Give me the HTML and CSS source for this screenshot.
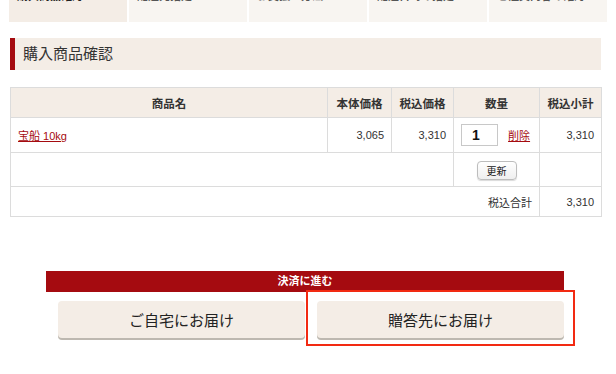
FILE: index.html
```html
<!DOCTYPE html>
<html lang="ja">
<head>
  <meta charset="UTF-8">
  <meta name="viewport" content="width=device-width, initial-scale=1.0">
  <title>購入商品確認</title>
  <link rel="stylesheet" href="styles.css">
</head>
<body>
  <div id="page">
    <ul id="steps">
      <li class="step active"><span>購入商品確認</span><span class="arrow">&#x25BC;</span></li>
      <li class="step"><span>配送先指定</span><span class="arrow">&#x25BC;</span></li>
      <li class="step"><span>お支払い方法</span><span class="arrow">&#x25BC;</span></li>
      <li class="step"><span>配送日時の指定</span><span class="arrow">&#x25BC;</span></li>
      <li class="step"><span>ご注文内容の確認</span></li>
    </ul>

    <div id="content">
      <h2 class="heading">購入商品確認</h2>

      <table id="cart">
        <thead>
          <tr>
            <th class="col-name">商品名</th>
            <th class="col-price">本体価格</th>
            <th class="col-tax">税込価格</th>
            <th class="col-qty">数量</th>
            <th class="col-sub">税込小計</th>
          </tr>
        </thead>
        <tbody>
          <tr class="item-row">
            <td><a href="#">宝船 10kg</a></td>
            <td class="num">3,065</td>
            <td class="num">3,310</td>
            <td class="qty">
              <input class="qty-input" type="text" value="1">
              <a href="#" class="remove">削除</a>
            </td>
            <td class="num">3,310</td>
          </tr>
          <tr class="update-row">
            <td colspan="3"></td>
            <td class="center"><button class="update" type="button">更新</button></td>
            <td></td>
          </tr>
          <tr class="total-row">
            <td colspan="4" class="num">税込合計</td>
            <td class="num">3,310</td>
          </tr>
        </tbody>
      </table>

      <div id="checkout">
        <div class="checkout-bar">決済に進む</div>
        <div class="checkout-buttons">
          <button class="deliver" type="button">ご自宅にお届け</button>
          <button class="deliver highlighted" type="button">贈答先にお届け</button>
        </div>
      </div>
    </div>
  </div>
</body>
</html>
```

FILE: styles.css
```css
* {
  box-sizing: border-box;
}

:root {
  --beige: #f4ede6;
  --beige-light: #f8f5f1;
  --red: #a50b10;
  --border: #dcdcdc;
  --text: #333333;
}

html, body {
  margin: 0;
  background: #ffffff;
  color: var(--text);
  font-family: "Liberation Sans", "Noto Sans CJK JP", sans-serif;
  font-size: 11px;
}

#page {
  width: 616px;
  height: 374px;
  overflow: hidden;
}

#steps {
  list-style: none;
  margin: -10px 0 0 9px;
  padding: 0;
  display: flex;
  gap: 2px;
}

.step {
  width: 118px;
  height: 32px;
  padding: 0 8px;
  background: var(--beige-light);
  display: flex;
  justify-content: space-between;
  font-size: 11px;
  font-weight: bold;
  line-height: 13px;
  white-space: nowrap;
  color: #555;
}

.step.active {
  background: var(--beige);
  color: #222;
}

.step .arrow {
  font-size: 8px;
  margin-right: 16px;
}

#content {
  padding: 16px 0 0 10px;
  width: 601px;
}

.heading {
  margin: 0;
  height: 32px;
  line-height: 32px;
  background: var(--beige);
  border-left: 5px solid var(--red);
  padding-left: 8px;
  font-size: 15px;
  font-weight: normal;
  color: #333;
}

#cart {
  margin-top: 17px;
  width: 591px;
  border-collapse: collapse;
  table-layout: fixed;
}

#cart th,
#cart td {
  border: 1px solid var(--border);
  padding: 0 7px;
}

#cart th {
  height: 30px;
  background: var(--beige);
  font-size: 11.5px;
  font-weight: bold;
  color: #333;
  text-align: center;
}

.col-name { width: 317px; }
.col-price { width: 64px; }
.col-tax { width: 62px; }
.col-qty { width: 86px; }
.col-sub { width: 62px; }

.item-row td {
  height: 35px;
  padding-bottom: 3px;
}

.item-row td:first-child {
  padding-left: 5px;
}

.update-row td {
  height: 34px;
}

.total-row td {
  height: 30px;
}

#cart a {
  color: var(--red);
}

.num {
  text-align: right;
}

.center {
  text-align: center;
}

.qty {
  padding-left: 9px;
  white-space: nowrap;
}

.qty-input {
  width: 37px;
  height: 22px;
  border: 1px solid #c8c8c8;
  padding: 0 0 0 10px;
  font: bold 14px "Liberation Sans", sans-serif;
  color: #111;
  vertical-align: middle;
}

.remove {
  margin-left: 7px;
  vertical-align: middle;
}

.update {
  width: 40px;
  height: 19px;
  padding: 0;
  border: 1px solid #bdbdbd;
  border-radius: 4px;
  background: linear-gradient(#ffffff, #efefef);
  box-shadow: 0 1px 1px rgba(0, 0, 0, 0.15);
  font: 10px "Liberation Sans", "Noto Sans CJK JP", sans-serif;
  color: #222;
  margin-top: 2px;
}

#checkout {
  margin-top: 54px;
}

.checkout-bar {
  margin-left: 36px;
  width: 518px;
  height: 21px;
  line-height: 21px;
  background: var(--red);
  color: #fff;
  font-weight: bold;
  font-size: 11px;
  text-align: center;
}

.checkout-buttons {
  display: flex;
  gap: 12px;
  margin: 9px 0 0 48px;
}

.deliver {
  position: relative;
  width: 247px;
  height: 37px;
  border: none;
  border-radius: 4px;
  background: var(--beige);
  box-shadow: 0 2px 0 #bdb8b0;
  font: 15px "Liberation Sans", "Noto Sans CJK JP", sans-serif;
  color: #222;
  padding: 0;
}

.highlighted::after {
  content: "";
  position: absolute;
  top: -11px;
  left: -11px;
  right: -11px;
  bottom: -8px;
  border: 2px solid #f22a12;
}
```
